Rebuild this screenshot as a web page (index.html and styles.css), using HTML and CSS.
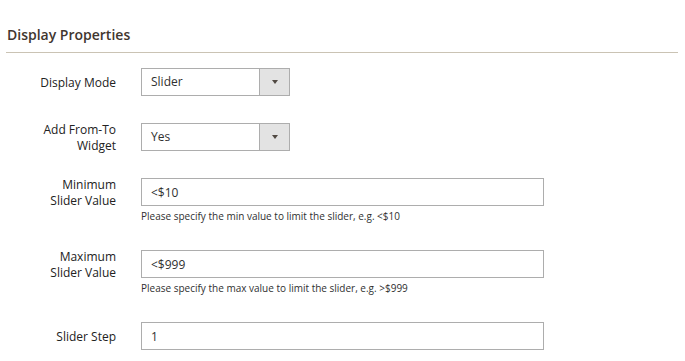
FILE: index.html
```html
<!DOCTYPE html>
<html lang="en">
<head>
<meta charset="UTF-8">
<meta name="viewport" content="width=device-width, initial-scale=1.0">
<title>Display Properties</title>
<link rel="stylesheet" href="styles.css">
</head>
<body>
<fieldset class="section">
<legend class="section-title">Display Properties</legend>

<div class="field">
<label class="field-label" for="displayMode">Display Mode</label>
<div class="control">
<div class="select">
<span class="select-value" id="displayMode">Slider</span>
<span class="select-button"><span class="arrow"></span></span>
</div>
</div>
</div>

<div class="field">
<label class="field-label two-line" for="fromTo">Add From-To<br>Widget</label>
<div class="control">
<div class="select">
<span class="select-value" id="fromTo">Yes</span>
<span class="select-button"><span class="arrow"></span></span>
</div>
</div>
</div>

<div class="field">
<label class="field-label two-line" for="minValue">Minimum<br>Slider Value</label>
<div class="control">
<input class="input-text" type="text" id="minValue" value="&lt;$10">
<div class="note">Please specify the min value to limit the slider, e.g. &lt;$10</div>
</div>
</div>

<div class="field">
<label class="field-label two-line" for="maxValue">Maximum<br>Slider Value</label>
<div class="control">
<input class="input-text" type="text" id="maxValue" value="&lt;$999">
<div class="note">Please specify the max value to limit the slider, e.g. &gt;$999</div>
</div>
</div>

<div class="field">
<label class="field-label" for="step">Slider Step</label>
<div class="control">
<input class="input-text" type="text" id="step" value="1">
</div>
</div>
</fieldset>
</body>
</html>
```

FILE: styles.css
```css
body {
  margin: 0;
  background: #fff;
  font-family: "Open Sans", sans-serif;
  color: #303030;
}

.section {
  margin: 0;
  padding: 0;
  border: none;
}

.section-title {
  display: block;
  float: left;
  width: 672px;
  box-sizing: border-box;
  margin: 25px 0 15px 6px;
  padding: 0 0 7px 1px;
  border-bottom: 1px solid #cac3b4;
  font-size: 14px;
  font-weight: 600;
  line-height: 20px;
  color: #41362f;
}

.field {
  clear: both;
  display: grid;
  grid-template-columns: 116px 403px;
  column-gap: 25px;
  align-items: start;
  margin-bottom: 27px;
}

.field-label {
  padding-top: 7px;
  text-align: right;
  font-size: 12px;
  font-weight: 400;
  line-height: 15.5px;
  color: #222;
}

.field-label.two-line {
  padding-top: 0;
  margin-top: -1px;
  margin-bottom: -3px;
}

.select {
  display: flex;
  width: 149px;
  height: 28px;
  box-sizing: border-box;
  border: 1px solid #adadad;
  background: #fff;
}

.select-value {
  flex: 1;
  padding-left: 9px;
  font-size: 12px;
  line-height: 26px;
}

.select-button {
  display: flex;
  align-items: center;
  justify-content: center;
  width: 29px;
  border-left: 1px solid #adadad;
  background: #e3e3e3;
}

.arrow {
  width: 0;
  height: 0;
  border-left: 3.5px solid transparent;
  border-right: 3.5px solid transparent;
  border-top: 4px solid #514943;
}

.input-text {
  display: block;
  width: 403px;
  height: 28px;
  box-sizing: border-box;
  margin: 0;
  padding: 0 9px;
  border: 1px solid #adadad;
  border-radius: 0;
  font-family: "Open Sans", sans-serif;
  font-size: 12px;
  color: #303030;
}

.note {
  margin-top: 3px;
  font-size: 10px;
  line-height: 14px;
  color: #303030;
}
```
